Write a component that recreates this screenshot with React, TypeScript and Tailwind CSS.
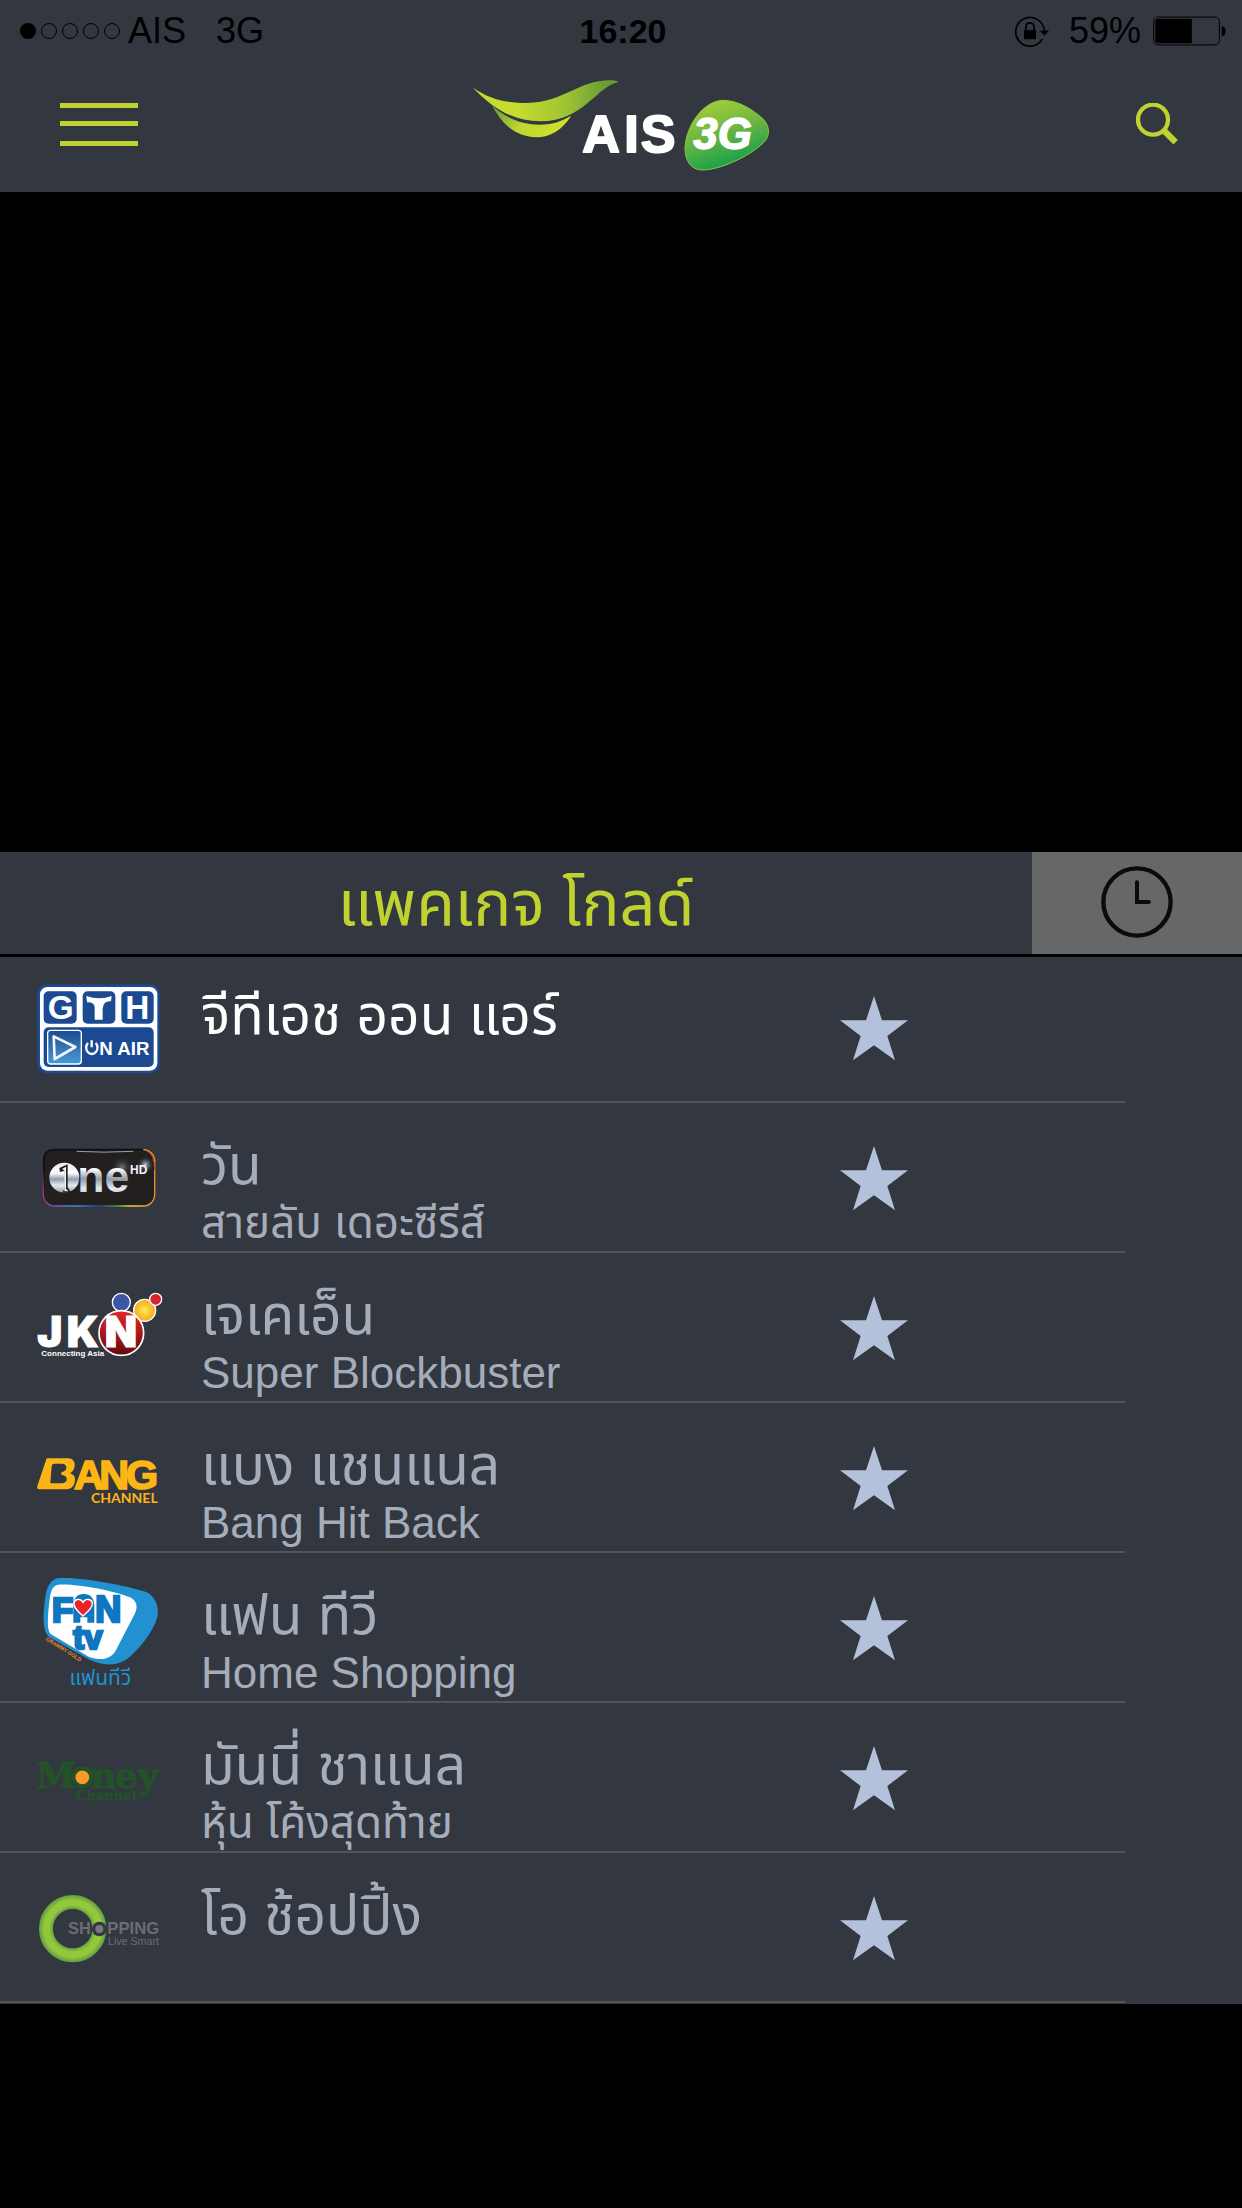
import React, { useState } from "react";

interface Channel {
  id: string;
  name: string;
  program?: string;
  Logo: React.FC;
}

const BrandLogo: React.FC = () => (
  <svg viewBox="96 234 894 282" className="w-[298px] h-[94px]" role="img" aria-label="AIS 3G">
    <defs>
      <linearGradient id="wing" x1="0" y1="0" x2="1" y2="0">
        <stop offset="0.3" stopColor="#c8dc2e" />
        <stop offset="0.65" stopColor="#9dc334" />
        <stop offset="0.9" stopColor="#6b9f35" />
      </linearGradient>
      <linearGradient id="smile" x1="0" y1="0" x2="1" y2="0.3">
        <stop offset="0" stopColor="#5c9a38" />
        <stop offset="0.5" stopColor="#c0d730" />
        <stop offset="1" stopColor="#cfdf2c" />
      </linearGradient>
      <linearGradient id="leaf" x1="0.3" y1="0" x2="0.65" y2="0.9">
        <stop offset="0" stopColor="#a6cd38" />
        <stop offset="0.5" stopColor="#6cb544" />
        <stop offset="1" stopColor="#16a049" />
      </linearGradient>
    </defs>
    <path d="M98 262 C150 300 200 309 262 309 C375 306 415 240 512 241 Q532 242 535 246 C470 260 430 363 302 364 C225 364 160 330 98 262Z" fill="url(#wing)" />
    <path d="M156 316 C195 354 245 374 300 374 C340 374 366 362 394 347 C366 390 330 412 290 412 C235 410 190 382 156 316Z" fill="url(#smile)" />
    <g fontSize="156" fontWeight="700" fill="#fff" stroke="#fff" strokeWidth="6" strokeLinejoin="round">
      <text x="427" y="456">A</text>
      <text x="553" y="456">I</text>
      <text x="602" y="456">S</text>
    </g>
    <path d="M849 301 C893 301 938 327 970 358 C986 375 990 397 980 416 C962 448 855 510 786 510 C752 509 735 482 735 444 C738 374 792 302 849 301Z" fill="url(#leaf)" stroke="#8cc63e" strokeWidth="3" />
    <text x="760" y="447" fontSize="132" fontWeight="700" fontStyle="italic" fill="#fff" stroke="#fff" strokeWidth="4" strokeLinejoin="round">3G</text>
  </svg>
);

const GthLogo: React.FC = () => (
  <svg viewBox="48 -9 384 360" className="w-32 h-[120px]" role="img" aria-label="GTH On Air">
    <defs>
      <linearGradient id="play" x1="0" y1="0" x2="0" y2="1">
        <stop offset="0" stopColor="#1c4a90" />
        <stop offset="1" stopColor="#4a9cd8" />
      </linearGradient>
    </defs>
    <rect x="52" y="43" width="367" height="267" rx="28" fill="#1b4a92" />
    <rect x="60" y="51" width="352" height="251" rx="22" fill="#fff" />
    <rect x="71" y="64" width="99" height="97" rx="15" fill="#1b4a92" />
    <rect x="188" y="64" width="98" height="97" rx="15" fill="#1b4a92" />
    <rect x="304" y="64" width="97" height="97" rx="15" fill="#1b4a92" />
    <rect x="71" y="172" width="330" height="119" rx="15" fill="#1b4a92" />
    <g fontSize="100" fontWeight="700" fill="#fff" textAnchor="middle">
      <text x="122" y="147">G</text>
      <text x="352" y="147">H</text>
    </g>
    <path d="M199 78 Q238 92 275 78 L273 94 Q250 92 248 116 L248 149 L224 149 L224 112 Q222 95 201 97Z" fill="#fff" />
    <rect x="83" y="181" width="101" height="101" rx="9" fill="url(#play)" stroke="#fff" strokeWidth="4" />
    <path d="M101 199 L166 231 L104 267Z" fill="none" stroke="#f1f4f8" strokeWidth="8" strokeLinejoin="round" />
    <path d="M204 219 A17 19 0 1 0 227 219 M215 211 V232" fill="none" stroke="#fff" strokeWidth="7" />
    <text x="238" y="255" fontSize="56" fontWeight="700" fill="#fff">N AIR</text>
  </svg>
);

const OneLogo: React.FC = () => (
  <svg viewBox="48 -39 384 360" className="w-32 h-[120px]" role="img" aria-label="One HD">
    <defs>
      <linearGradient id="rim" x1="0" y1="0" x2="1" y2="0">
        <stop offset="0" stopColor="#a03a9a" />
        <stop offset="0.3" stopColor="#3b8fd0" />
        <stop offset="0.5" stopColor="#2c3f9a" />
        <stop offset="0.65" stopColor="#3f9a4a" />
        <stop offset="0.78" stopColor="#e8dc30" />
        <stop offset="1" stopColor="#ef9022" />
      </linearGradient>
      <linearGradient id="rimFade" x1="0" y1="0" x2="0" y2="1">
        <stop offset="0.4" stopColor="#0d0f12" />
        <stop offset="1" stopColor="#0d0f12" stopOpacity="0" />
      </linearGradient>
      <linearGradient id="chrome" x1="0" y1="0" x2="0" y2="1">
        <stop offset="0" stopColor="#e8ecf0" />
        <stop offset="0.35" stopColor="#fbfcfd" />
        <stop offset="0.55" stopColor="#8f9dab" />
        <stop offset="0.75" stopColor="#e6eaee" />
        <stop offset="1" stopColor="#9aa0a6" />
      </linearGradient>
      <radialGradient id="glow">
        <stop offset="0" stopColor="#b9d0e2" />
        <stop offset="1" stopColor="#231f1e" stopOpacity="0" />
      </radialGradient>
    </defs>
    <rect x="70" y="59" width="334" height="169" rx="34" fill="#231f1e" stroke="url(#rim)" strokeWidth="4" />
    <path d="M71 200 V94 Q71 59 104 59 H370" fill="none" stroke="url(#rimFade)" strokeWidth="6" />
    <path d="M170 64 Q250 69 340 64" fill="none" stroke="#8fa0b0" strokeWidth="3" />
    <path d="M378 62 Q404 70 404 120" fill="none" stroke="#d8402c" strokeWidth="3" />
    <circle cx="376" cy="104" r="26" fill="url(#glow)" />
    <circle cx="306" cy="112" r="34" fill="url(#glow)" opacity="0.5" />
    <circle cx="133" cy="143" r="45" fill="url(#chrome)" />
    <path d="M118 114 L143 103 V172 L154 188 H128 L134 172 V122 L120 126Z" fill="#231f1e" />
    <path d="M126 117 L138 110 V176 L145 184 H133 V121Z" fill="#f4f6f8" />
    <text x="172" y="186" fontSize="134" fontWeight="700" fill="url(#chrome)">ne</text>
    <text x="330" y="132" fontSize="36" fontWeight="700" fill="#f2f6fa">HD</text>
  </svg>
);

const JknLogo: React.FC = () => (
  <svg viewBox="48 411 384 360" className="w-32 h-[120px]" role="img" aria-label="JKN Connecting Asia">
    <defs>
      <linearGradient id="red" x1="0" y1="0" x2="0" y2="1">
        <stop offset="0" stopColor="#e3262c" />
        <stop offset="0.5" stopColor="#a8191e" />
        <stop offset="1" stopColor="#5e0c10" />
      </linearGradient>
      <radialGradient id="sun">
        <stop offset="0" stopColor="#fdec52" />
        <stop offset="1" stopColor="#f8a51f" />
      </radialGradient>
    </defs>
    <circle cx="304" cy="517" r="27" fill="#3c56a6" stroke="#fff" strokeWidth="4" />
    <circle cx="374" cy="541" r="33" fill="url(#sun)" stroke="#fff" strokeWidth="4" />
    <circle cx="407" cy="508" r="18" fill="#d8232a" stroke="#fff" strokeWidth="4" />
    <circle cx="304" cy="609" r="67" fill="url(#red)" stroke="#fff" strokeWidth="5" />
    <g fontFamily="Inter, sans-serif" fontSize="126" fontWeight="900" fill="#fff" stroke="#fff" strokeWidth="3">
      <text x="52" y="652">J</text>
      <text x="140" y="652">K</text>
      <text x="254" y="652">N</text>
    </g>
    <text x="64" y="678" fontSize="24" fontWeight="700" fill="#fff">Connecting Asia</text>
  </svg>
);

const BangLogo: React.FC = () => (
  <svg viewBox="48 -39 384 360" className="w-32 h-[120px]" role="img" aria-label="Bang Channel">
    <path
      d="M80 85 H146 Q166 88 164 108 Q162 124 150 130 Q170 136 164 158 Q158 178 136 178 H58 Q50 178 52 168Z M104 101 Q96 101 95 108 L91 160 H128 Q143 156 140 145 Q138 136 124 134 V127 Q140 124 139 112 Q138 101 126 101Z"
      fill="#fdb515"
      fillRule="evenodd"
    />
    <g fontSize="124" fontWeight="700" fill="#fdb515" stroke="#fdb515" strokeWidth="5">
      <text x="162" y="177">A</text>
      <text x="238" y="177">N</text>
      <text x="318" y="177">G</text>
    </g>
    <text x="213" y="218" fontFamily="Lato, sans-serif" fontSize="42" fontWeight="700" fill="#fdb515">CHANNEL</text>
  </svg>
);

const FanLogo: React.FC = () => (
  <svg viewBox="48 411 384 360" className="w-32 h-[120px]" role="img" aria-label="Fan TV">
    <path d="M112 445 C180 438 330 470 378 486 C406 498 418 530 412 560 C404 600 350 668 316 690 C280 712 240 704 206 688 L86 620 C64 600 70 540 78 490 C82 466 96 448 112 445Z" fill="#2191d2" />
    <path d="M114 464 C170 460 280 482 330 502 C352 514 354 532 344 552 L288 660 C274 688 244 694 206 680 L92 612 C80 600 82 560 90 500 C94 478 100 466 114 464Z" fill="#fff" />
    <g fontWeight="700" fill="#0f76bf" stroke="#0f76bf" strokeWidth="8">
      <text x="96" y="575" fontSize="104">F</text>
      <text x="226" y="575" fontSize="108">N</text>
      <text x="160" y="657" fontSize="98">tv</text>
    </g>
    <path d="M160 578 V530 Q160 492 191 492 Q223 492 223 530 V578 H202 V562 H181 V578Z" fill="#0f76bf" />
    <path d="M189 558 C174 544 162 534 162 521 C162 507 181 503 189 517 C197 503 217 507 217 521 C217 534 204 544 189 558Z" fill="#ec2227" stroke="#fff" strokeWidth="4" />
    <text x="76" y="630" fontSize="16" fontWeight="700" fill="#e8892b" transform="rotate(32 76 630)">GRAMMY GOLD</text>
    <text x="241" y="764" fontSize="63" fill="#2191d2" textAnchor="middle">แฟนทีวี</text>
  </svg>
);

const MoneyLogo: React.FC = () => (
  <svg viewBox="48 -39 384 360" className="w-32 h-[120px]" role="img" aria-label="Money Channel">
    <g fontFamily="DejaVu Serif, serif" fontWeight="700" fill="#235229" stroke="#235229" strokeWidth="3">
      <text x="48" y="173" fontSize="108">M</text>
      <text x="214" y="173" fontSize="104">n</text>
      <text x="286" y="173" fontSize="104">e</text>
      <text x="354" y="173" fontSize="104">y</text>
      <text x="168" y="210" fontSize="39" strokeWidth="1">Channel</text>
    </g>
    <circle cx="187" cy="142" r="27" fill="#f99b2a" stroke="#235229" strokeWidth="13" />
  </svg>
);

const ShoppingLogo: React.FC = () => (
  <svg viewBox="48 411 384 360" className="w-32 h-[120px]" role="img" aria-label="O Shopping Live Smart">
    <defs>
      <radialGradient id="ring" gradientUnits="userSpaceOnUse" cx="158" cy="596" r="101">
        <stop offset="0.57" stopColor="#5e9a42" />
        <stop offset="0.7" stopColor="#94c83c" />
        <stop offset="0.85" stopColor="#94c83c" />
        <stop offset="1" stopColor="#5f9b45" />
      </radialGradient>
    </defs>
    <circle cx="158" cy="596" r="80" fill="none" stroke="url(#ring)" strokeWidth="42" />
    <circle cx="238" cy="597" r="22" fill="#333740" />
    <g fontWeight="700" fill="#6b6d72">
      <text x="144" y="613" fontSize="49">SH</text>
      <text x="262" y="613" fontSize="50">PPING</text>
    </g>
    <circle cx="238" cy="597" r="12" fill="#77797e" />
    <text x="264" y="645" fontSize="32" fill="#6b6d72">Live Smart</text>
  </svg>
);

const channels: Channel[] = [
  { id: "gth", name: "จีทีเอช ออน แอร์", Logo: GthLogo },
  { id: "one", name: "วัน", program: "สายลับ เดอะซีรีส์", Logo: OneLogo },
  { id: "jkn", name: "เจเคเอ็น", program: "Super Blockbuster", Logo: JknLogo },
  { id: "bang", name: "แบง แชนแนล", program: "Bang Hit Back", Logo: BangLogo },
  { id: "fan", name: "แฟน ทีวี", program: "Home Shopping", Logo: FanLogo },
  { id: "money", name: "มันนี่ ชาแนล", program: "หุ้น โค้งสุดท้าย", Logo: MoneyLogo },
  { id: "oshop", name: "โอ ช้อปปิ้ง", Logo: ShoppingLogo },
];

const StatusBar: React.FC = () => (
  <div className="grid grid-cols-[1fr_auto_1fr] items-center h-[58px] pt-1 pl-5 pr-4 text-[36px] leading-[54px] text-black">
    <div className="flex items-center">
      <div className="flex gap-[5px] mr-2">
        <span className="size-4 rounded-full bg-black" />
        {[1, 2, 3, 4].map((dot) => (
          <span key={dot} className="size-4 rounded-full border border-black" />
        ))}
      </div>
      <span>AIS</span>
      <span className="ml-[30px]">3G</span>
    </div>
    <span className="text-[34px] font-bold">16:20</span>
    <div className="flex items-center justify-end">
      <svg viewBox="0 0 102 92" className="w-[34px] h-[31px]" aria-hidden="true">
        <path d="M82 69 A43 43 0 1 1 88 44" fill="none" stroke="#000" strokeWidth="5" />
        <path d="M74 43 H102 L88 58Z" />
        <rect x="27" y="42" width="36" height="27" />
        <path d="M33 44 V32 Q33 20 45 20 Q57 20 57 32 V44" fill="none" stroke="#000" strokeWidth="5" />
      </svg>
      <span className="ml-5">59%</span>
      <svg viewBox="0 0 220 90" className="w-[73px] h-[30px] ml-3" aria-hidden="true">
        <rect x="2" y="3" width="198" height="84" rx="14" fill="none" stroke="#000" strokeWidth="3" />
        <path d="M117 8 V82 H16 Q7 82 7 73 V17 Q7 8 16 8Z" />
        <path d="M207 31 Q219 33 219 46 Q219 59 207 61Z" />
      </svg>
    </div>
  </div>
);

const ChannelRow: React.FC<{ channel: Channel; active: boolean; onSelect: () => void }> = ({ channel, active, onSelect }) => {
  const { name, program, Logo } = channel;

  return (
    <li className="flex items-center h-[150px] pl-9 border-b-2 border-[#555555]">
      <button onClick={onSelect} className="flex flex-1 items-center h-full text-left cursor-pointer">
        <Logo />
        <span className={`flex flex-col self-start pt-[34px] ml-[37px] leading-[57px] whitespace-nowrap ${active ? "text-white" : "text-[#a5adbb]"}`}>
          <span className="text-[55px]">{name}</span>
          {program && <span className="text-[44px]">{program}</span>}
        </span>
      </button>
      <button aria-label={`Favorite ${name}`} className="mr-[217px] cursor-pointer">
        <svg viewBox="0 -9 204 204" className="size-17" aria-hidden="true">
          <path d="M102 0 L126 73 H204 L142 120 L165 193 L102 148 L39 193 L62 120 L0 73 H78Z" fill="#b4c1da" />
        </svg>
      </button>
    </li>
  );
};

const App: React.FC = () => {
  const [selected, setSelected] = useState("gth");

  return (
    <div className="min-h-screen bg-black font-['Liberation_Sans','Noto_Sans_Thai',sans-serif]">
      <header className="bg-[#333740]">
        <StatusBar />
        <nav className="grid grid-cols-[1fr_auto_1fr] items-center h-[134px] px-[60px]">
          <button aria-label="Menu" className="justify-self-start cursor-pointer">
            <svg viewBox="0 0 78 44" className="w-[78px] h-11" fill="#bfd22f" aria-hidden="true">
              <rect y="0" width="78" height="5" />
              <rect y="18" width="78" height="5" />
              <rect y="38" width="78" height="5" />
            </svg>
          </button>
          <BrandLogo />
          <button aria-label="Search" className="justify-self-end cursor-pointer">
            <svg viewBox="0 3 141 132" className="w-[47px] h-11" aria-hidden="true">
              <circle cx="54" cy="53" r="45" fill="none" stroke="#bfd22f" strokeWidth="13" />
              <path d="M86 85 L122 121" stroke="#bfd22f" strokeWidth="19" />
            </svg>
          </button>
        </nav>
      </header>

      {/* Video area */}
      <div className="h-[660px] bg-black" />

      <section>
        <div className="relative z-10 flex h-[105px] bg-[#333740] border-b-[3px] border-black">
          <h1 className="flex flex-1 items-center justify-center text-[63px] leading-[80px] text-[#bfd22f]">แพคเกจ โกลด์</h1>
          <button aria-label="Schedule" className="flex w-[210px] items-center justify-center pb-0.5 bg-[#666769] cursor-pointer">
            <svg viewBox="0 0 214 214" className="size-[72px]" fill="none" stroke="#0a0b0b" strokeLinecap="round" aria-hidden="true">
              <circle cx="107" cy="107" r="100" strokeWidth="13" />
              <path d="M107 48 V107 H142" strokeWidth="12" />
            </svg>
          </button>
        </div>
        {/* First row tucks under the tab bar */}
        <ul className="-mt-1 pr-[117px] pb-px bg-[#333740]">
          {channels.map((channel) => (
            <ChannelRow
              key={channel.id}
              channel={channel}
              active={channel.id === selected}
              onSelect={() => setSelected(channel.id)}
            />
          ))}
        </ul>
      </section>
    </div>
  );
};

export default App;
